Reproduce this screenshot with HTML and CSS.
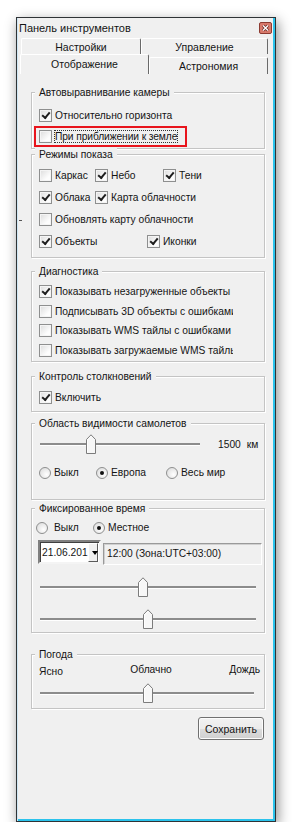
FILE: index.html
```html
<!DOCTYPE html>
<html>
<head>
    <title>Панель инструментов</title>
    <meta charset="UTF-8">
    <link rel="stylesheet" href="styles.css">
</head>
<body>
    <div class="window">
        <div class="titlebar">
            <span class="title">Панель инструментов</span>
            <span class="close-btn">
                <svg width="13" height="12" viewBox="0 0 13 12">
                    <rect x="0.5" y="0.5" width="12" height="11" rx="1.5" fill="#d97a6c" stroke="#8c3b31"/>
                    <path d="M4 3.5 L9 8.5 M9 3.5 L4 8.5" stroke="#6b2c26" stroke-width="3"/>
                    <path d="M4 3.5 L9 8.5 M9 3.5 L4 8.5" stroke="#fff" stroke-width="1.4"/>
                </svg>
            </span>
        </div>

        <div class="tabs">
            <div class="tab-row back">
                <div class="tab tab-settings">Настройки</div>
                <div class="tab tab-control">Управление</div>
            </div>
            <div class="tab-row front">
                <div class="tab tab-display active">Отображение</div>
                <div class="tab tab-astro">Астрономия</div>
            </div>
        </div>

        <span class="edge-mark"></span>

        <div class="page">
            <div class="group g-camera">
                <div class="group-title">Автовыравнивание камеры</div>
                <div class="group-body">
                    <label class="check"><span class="box checked"></span>Относительно горизонта</label>
                    <span class="highlight">
                        <label class="check"><span class="box"></span><span class="focus">При приближении к земле</span></label>
                    </span>
                </div>
            </div>

            <div class="group g-modes">
                <div class="group-title">Режимы показа</div>
                <div class="group-body">
                    <div class="line">
                        <label class="check col-a"><span class="box"></span>Каркас</label>
                        <label class="check col-b"><span class="box checked"></span>Небо</label>
                        <label class="check"><span class="box checked"></span>Тени</label>
                    </div>
                    <div class="line">
                        <label class="check col-a"><span class="box checked"></span>Облака</label>
                        <label class="check"><span class="box checked"></span>Карта облачности</label>
                    </div>
                    <div class="line">
                        <label class="check"><span class="box"></span><span class="clip clip-update">Обновлять карту облачности</span></label>
                    </div>
                    <div class="line">
                        <label class="check col-wide"><span class="box checked"></span>Объекты</label>
                        <label class="check"><span class="box checked"></span>Иконки</label>
                    </div>
                </div>
            </div>

            <div class="group g-diag">
                <div class="group-title">Диагностика</div>
                <div class="group-body">
                    <label class="check"><span class="box checked"></span><span class="clip">Показывать незагруженные объекты</span></label>
                    <label class="check"><span class="box"></span><span class="clip">Подписывать 3D объекты с ошибками</span></label>
                    <label class="check"><span class="box"></span><span class="clip">Показывать WMS тайлы с ошибками</span></label>
                    <label class="check"><span class="box"></span><span class="clip">Показывать загружаемые WMS тайлы</span></label>
                </div>
            </div>

            <div class="group g-collision">
                <div class="group-title">Контроль столкновений</div>
                <div class="group-body">
                    <label class="check"><span class="box checked"></span>Включить</label>
                </div>
            </div>

            <div class="group g-planes">
                <div class="group-title">Область видимости самолетов</div>
                <div class="group-body">
                    <div class="line">
                        <div class="slider slider-range">
                            <span class="track"></span>
                            <svg class="thumb" style="left: 46px" width="10" height="20" viewBox="0 0 10 20">
                                <path d="M0.5 5.5 L5 0.8 L9.5 5.5 L9.5 19.5 L0.5 19.5 Z" fill="#f7f7f7" stroke="#7c7c7c"/>
                                <path d="M1.5 6 L5 2.3 M1.5 6 L1.5 18.5" stroke="#fff" fill="none"/>
                            </svg>
                        </div>
                        <span class="range-value">1500</span><span class="range-unit">км</span>
                    </div>
                    <div class="line radios">
                        <label class="radio-opt r-off"><span class="radio"></span>Выкл</label>
                        <label class="radio-opt r-europe"><span class="radio on"></span>Европа</label>
                        <label class="radio-opt"><span class="radio"></span>Весь мир</label>
                    </div>
                </div>
            </div>

            <div class="group g-time">
                <div class="group-title">Фиксированное время</div>
                <div class="group-body">
                    <div class="line radios">
                        <label class="radio-opt r-time-off"><span class="radio"></span>Выкл</label>
                        <label class="radio-opt"><span class="radio on"></span>Местное</label>
                    </div>
                    <div class="line date-line">
                        <div class="date-box">
                            <span class="date-text">21.06.201</span>
                            <span class="drop-btn"></span>
                        </div>
                        <div class="time-box">12:00 (Зона:UTC+03:00)</div>
                    </div>
                    <div class="slider slider-wide">
                        <span class="track"></span>
                        <svg class="thumb" style="left: 98px" width="10" height="20" viewBox="0 0 10 20">
                            <path d="M0.5 5.5 L5 0.8 L9.5 5.5 L9.5 19.5 L0.5 19.5 Z" fill="#f7f7f7" stroke="#7c7c7c"/>
                            <path d="M1.5 6 L5 2.3 M1.5 6 L1.5 18.5" stroke="#fff" fill="none"/>
                        </svg>
                    </div>
                    <div class="slider slider-wide">
                        <span class="track"></span>
                        <svg class="thumb" style="left: 103px" width="10" height="20" viewBox="0 0 10 20">
                            <path d="M0.5 5.5 L5 0.8 L9.5 5.5 L9.5 19.5 L0.5 19.5 Z" fill="#f7f7f7" stroke="#7c7c7c"/>
                            <path d="M1.5 6 L5 2.3 M1.5 6 L1.5 18.5" stroke="#fff" fill="none"/>
                        </svg>
                    </div>
                </div>
            </div>

            <div class="group g-weather">
                <div class="group-title">Погода</div>
                <div class="group-body">
                    <div class="weather-labels">
                        <span class="w-clear">Ясно</span>
                        <span class="w-cloudy">Облачно</span>
                        <span class="w-rain">Дождь</span>
                    </div>
                    <div class="slider slider-weather">
                        <span class="track"></span>
                        <svg class="thumb" style="left: 103px" width="10" height="20" viewBox="0 0 10 20">
                            <path d="M0.5 5.5 L5 0.8 L9.5 5.5 L9.5 19.5 L0.5 19.5 Z" fill="#f7f7f7" stroke="#7c7c7c"/>
                            <path d="M1.5 6 L5 2.3 M1.5 6 L1.5 18.5" stroke="#fff" fill="none"/>
                        </svg>
                    </div>
                </div>
            </div>

            <button class="save-btn">Сохранить</button>
        </div>
    </div>
</body>
</html>
```

FILE: styles.css
```css
* {
    margin: 0;
    padding: 0;
    box-sizing: border-box;
}

body {
    background: #fff;
    font-family: "Liberation Sans", Arial, sans-serif;
    font-size: 10.25px;
    color: #141414;
}

.window {
    position: relative;
    margin: 17px 0 0 16px;
    width: 260px;
    height: 805px;
    background: #f0f0f0;
    border: 1px solid #2f3336;
    box-shadow: inset 1px 0 #cfe7f4, inset -2px -2px #2bc3ec, 2px 4px 12px rgba(0, 0, 0, 0.45);
}

.titlebar {
    height: 20px;
    display: flex;
    align-items: center;
    justify-content: space-between;
    padding: 0 3px 0 2px;
    font-size: 11px;
}

.close-btn {
    display: flex;
}

/* tabs */
.tab-row {
    display: flex;
}

.tab-row.back {
    height: 16px;
    padding-left: 4px;
}

.tab-row.front {
    height: 20px;
    padding-left: 3px;
}

.tab {
    background: #f0f0f0;
    border-top: 1px solid #fff;
    border-left: 1px solid #fff;
    border-right: 1px solid #6a6a6a;
    border-radius: 2px 2px 0 0;
    text-align: center;
    font-size: 10.5px;
}

.back .tab {
    line-height: 15px;
    padding-top: 1px;
}

.tab-settings { width: 120px; }
.tab-control { width: 127px; }

.tab-display {
    width: 129px;
    height: 20px;
    line-height: 19px;
}

.tab-astro {
    width: 119px;
    height: 17px;
    margin-top: 3px;
    line-height: 16px;
}

.edge-mark {
    position: absolute;
    left: 2px;
    top: 202px;
    width: 3px;
    height: 1px;
    background: #555;
}

/* page & groups */
.page {
    padding-left: 14px;
}

.group {
    width: 234px;
    border: 1px solid #c4c4c4;
    box-shadow: inset 1px 1px #fff, 1px 1px #fff;
    padding-left: 7px;
}

.group-title {
    width: fit-content;
    margin: -7px 0 -6px -4px;
    padding: 0 4px;
    line-height: 13px;
    background: #f0f0f0;
}

.group-body {
    display: flex;
    flex-direction: column;
}

.g-camera { margin-top: 18px; height: 57px; }
.g-camera .group-body { padding-top: 16px; gap: 4px; }

.g-modes { margin-top: 5px; height: 104px; }
.g-modes .group-body { padding-top: 14px; gap: 9px; }

.g-diag { margin-top: 13px; height: 91px; }
.g-diag .group-body { padding-top: 13px; gap: 6.5px; }

.g-collision { margin-top: 14px; height: 36px; }
.g-collision .group-body { padding-top: 14px; }

.g-planes { margin-top: 11px; height: 77px; }
.g-planes .group-body { padding-top: 10px; gap: 12px; }

.g-time { margin-top: 8px; height: 125px; }
.g-time .group-body { padding-top: 12px; }

.g-weather { margin-top: 21px; height: 55px; }
.g-weather .group-body { padding-top: 8px; }

.line {
    display: flex;
    align-items: center;
}

/* checkboxes */
.check {
    display: flex;
    align-items: center;
    gap: 3px;
    height: 13px;
    white-space: nowrap;
}

.box {
    position: relative;
    flex: none;
    width: 13px;
    height: 13px;
    border: 1px solid #8e8f8f;
    background: linear-gradient(135deg, #dcdcdc, #fdfdfd 70%);
    box-shadow: inset 0 0 0 1px #f4f4f4;
}

.box.checked::after {
    content: '';
    position: absolute;
    left: 2px;
    top: 2px;
    width: 6px;
    height: 3px;
    border-left: 2px solid #1e1e1e;
    border-bottom: 2px solid #1e1e1e;
    transform: rotate(-50deg);
}

.col-a { width: 56px; }
.col-b { width: 68px; }
.col-wide { width: 108px; }

.clip {
    display: block;
    width: 178px;
    overflow: hidden;
}

.clip-update { width: 139px; }

.highlight {
    display: flex;
    align-items: center;
    width: 153px;
    height: 21px;
    margin-left: -5px;
    padding-left: 3px;
    border: 2px solid #e8141c;
}

.focus {
    outline: 1px dotted #333;
    letter-spacing: -0.1px;
}

/* radios */
.radios {
    height: 13px;
}

.radio-opt {
    display: flex;
    align-items: center;
    gap: 3px;
}

.radio {
    position: relative;
    width: 12px;
    height: 12px;
    border-radius: 50%;
    border: 1px solid #8e8f8f;
    background: radial-gradient(circle at 65% 65%, #fff, #d8d8d8);
}

.radio.on::after {
    content: '';
    position: absolute;
    left: 3px;
    top: 3px;
    width: 4px;
    height: 4px;
    border-radius: 50%;
    background: #111;
}

.r-off { width: 57px; }
.r-europe { width: 70px; }
.r-time-off { width: 54px; }
.r-time-off .radio { margin-left: -3px; margin-right: 3px; }

/* sliders */
.slider {
    position: relative;
    height: 20px;
    margin-left: 1px;
}

.track {
    position: absolute;
    left: 0;
    right: 0;
    top: 9px;
    height: 3px;
    background: linear-gradient(#8c8c8c 0 2px, #fff 2px);
}

.thumb {
    position: absolute;
    top: 0;
}

.slider-range { width: 160px; }
.slider-wide { width: 216px; margin-top: 12px; }
.slider-weather { width: 214px; margin-top: 7px; }

.range-value { margin-left: 18px; }
.range-unit { margin-left: 6px; }

/* date / time */
.date-line {
    margin-top: 6px;
    align-items: flex-start;
    margin-left: -1px;
}

.date-box {
    display: flex;
    align-items: center;
    justify-content: space-between;
    width: 63px;
    height: 24px;
    background: #fff;
    border: 2px solid;
    border-color: #808080 #f4f4f4 #f4f4f4 #808080;
    box-shadow: inset 1px 1px #404040;
    padding: 0 1px 0 2px;
}

.drop-btn {
    position: relative;
    width: 14px;
    height: 19px;
    background: #f0f0f0;
    border: 1px solid;
    border-color: #fff #5a5a5a #5a5a5a #fff;
}

.drop-btn::after {
    content: '';
    position: absolute;
    left: 3px;
    top: 7px;
    border-left: 3.5px solid transparent;
    border-right: 3.5px solid transparent;
    border-top: 4px solid #000;
}

.time-box {
    width: 159px;
    height: 22px;
    margin: 3px 0 0 2px;
    padding-left: 3px;
    line-height: 19px;
    border: 1px solid;
    border-color: #9a9a9a #fff #fff #9a9a9a;
    box-shadow: inset 1px 1px #d0d0d0;
}

/* weather */
.weather-labels {
    display: flex;
    justify-content: space-between;
    width: 221px;
    height: 13px;
    line-height: 13px;
}

.w-clear { margin-top: 2px; }
.w-cloudy { margin-left: 10px; }

/* button */
.save-btn {
    display: block;
    margin: 8px 0 0 167px;
    width: 66px;
    height: 23px;
    font-family: inherit;
    font-size: 10.5px;
    color: #141414;
    border: 1px solid #707070;
    border-radius: 3px;
    background: linear-gradient(#f2f2f2 0%, #ebebeb 50%, #dddddd 51%, #cfcfcf 100%);
    box-shadow: inset 0 0 0 1px #fcfcfc;
}
```
